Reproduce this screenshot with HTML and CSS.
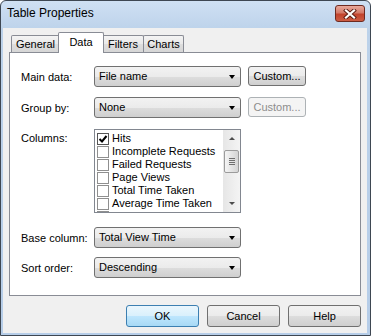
FILE: index.html
```html
<!DOCTYPE html>
<html lang="en">
<head>
    <meta charset="UTF-8">
    <title>Table Properties</title>
    <link rel="stylesheet" href="styles.css">
</head>
<body>
    <div class="window">
        <div class="titlebar">
            <span class="title">Table Properties</span>
            <button class="close">
                <svg width="14" height="10" viewBox="0 0 14 10">
                    <path d="M3 1.5 L11 8.5 M11 1.5 L3 8.5" stroke="#5a1a12" stroke-width="4" stroke-linecap="square"/>
                    <path d="M3 1.5 L11 8.5 M11 1.5 L3 8.5" stroke="#fff" stroke-width="2.2" stroke-linecap="square"/>
                </svg>
            </button>
        </div>
        <div class="client">
            <div class="tabs">
                <div class="tab tab-general">General</div>
                <div class="tab tab-data active">Data</div>
                <div class="tab tab-filters">Filters</div>
                <div class="tab tab-charts">Charts</div>
            </div>
            <div class="panel">
                <div class="row row-main">
                    <label>Main data:</label>
                    <div class="combo">File name<span class="arrow"></span></div>
                    <button class="btn custom">Custom...</button>
                </div>
                <div class="row row-group">
                    <label>Group by:</label>
                    <div class="combo">None<span class="arrow"></span></div>
                    <button class="btn custom" disabled>Custom...</button>
                </div>
                <div class="row row-columns">
                    <label class="top">Columns:</label>
                    <div class="listbox">
                        <ul class="items">
                            <li><span class="check on"><svg width="10" height="10" viewBox="0 0 10 10"><path d="M1.5 5 L4 7.5 L8.5 2" fill="none" stroke="#000" stroke-width="2"/></svg></span>Hits</li>
                            <li><span class="check"></span>Incomplete Requests</li>
                            <li><span class="check"></span>Failed Requests</li>
                            <li><span class="check"></span>Page Views</li>
                            <li><span class="check"></span>Total Time Taken</li>
                            <li><span class="check"></span>Average Time Taken</li>
                            <li><span class="check"></span>Total View Time</li>
                        </ul>
                        <div class="scrollbar">
                            <div class="sb-btn"><span class="sb-up"></span></div>
                            <div class="sb-track">
                                <div class="thumb"><span class="grip"></span></div>
                            </div>
                            <div class="sb-btn"><span class="sb-down"></span></div>
                        </div>
                    </div>
                </div>
                <div class="row row-base">
                    <label>Base column:</label>
                    <div class="combo">Total View Time<span class="arrow"></span></div>
                </div>
                <div class="row row-sort">
                    <label>Sort order:</label>
                    <div class="combo">Descending<span class="arrow"></span></div>
                </div>
            </div>
            <div class="actions">
                <button class="btn action default">OK</button>
                <button class="btn action">Cancel</button>
                <button class="btn action">Help</button>
            </div>
        </div>
    </div>
</body>
</html>
```

FILE: styles.css
```css
body {
    margin: 0;
    font-family: 'Liberation Sans', Arial, sans-serif;
    font-size: 11px;
    color: #000;
    background: #fff;
}
.window {
    box-sizing: border-box;
    width: 371px;
    height: 336px;
    border: 1px solid #3e4752;
    border-radius: 6px 6px 0 0;
    background: linear-gradient(#cfe0f3, #bcd2ea 30px, #b6cde8);
    display: flex;
    flex-direction: column;
}
.titlebar {
    height: 27px;
    display: flex;
    align-items: flex-start;
    padding: 0 5px 0 6px;
}
.title {
    font-size: 12px;
    line-height: 14px;
    padding-top: 5px;
}
.close {
    margin-left: auto;
    margin-top: 4px;
    width: 30px;
    height: 17px;
    padding: 0;
    border: 1px solid #6e2a20;
    border-radius: 3px;
    background: linear-gradient(#e9a99b, #d47b6a 45%, #c2432d 55%, #cc5d44);
    display: flex;
    align-items: center;
    justify-content: center;
}
.client {
    flex: 1;
    margin: 0 3px 2px 2px;
    background: #f0f0f0;
    padding: 4px 6px 0 6px;
    display: flex;
    flex-direction: column;
}
.tabs {
    display: flex;
    align-items: flex-end;
    height: 21px;
    margin: 0 0 -1px 2px;
    position: relative;
    z-index: 1;
}
.tab {
    box-sizing: border-box;
    height: 17px;
    margin-bottom: 1px;
    border: 1px solid #898c95;
    border-bottom: none;
    border-radius: 2px 2px 0 0;
    background: linear-gradient(#f4f4f4, #e9e9e9 50%, #dedede 51%, #d6d6d6);
    text-align: center;
    line-height: 16px;
}
.tab-general { width: 49px; }
.tab-data { width: 46px; }
.tab-filters { width: 42px; }
.tab-charts { width: 41px; margin-left: -1px; }
.tab.active {
    height: 21px;
    margin: 0 -2px;
    background: #fff;
    position: relative;
    z-index: 2;
    line-height: 18px;
}
.panel {
    box-sizing: border-box;
    height: 244px;
    border: 1px solid #898c95;
    background: #fff;
    padding: 0 0 0 11px;
}
.row {
    display: flex;
    align-items: center;
}
.row-main { margin-top: 13px; }
.row-group { margin-top: 10px; }
.row-columns { margin-top: 11px; align-items: flex-start; }
.row-base { margin-top: 14px; }
.row-sort { margin-top: 9px; }
label {
    width: 73px;
}
label.top {
    padding-top: 3px;
}
.combo {
    box-sizing: border-box;
    width: 147px;
    height: 21px;
    border: 1px solid #707070;
    border-radius: 3px;
    background: linear-gradient(#f2f2f2, #ebebeb 50%, #dddddd 51%, #cfcfcf);
    padding-left: 4px;
    line-height: 19px;
    position: relative;
}
.arrow {
    position: absolute;
    right: 5px;
    top: 8px;
    border-left: 3.5px solid transparent;
    border-right: 3.5px solid transparent;
    border-top: 4px solid #000;
}
.btn {
    box-sizing: border-box;
    font-family: inherit;
    font-size: 11px;
    color: #000;
    border: 1px solid #707070;
    border-radius: 3px;
    background: linear-gradient(#f2f2f2, #ebebeb 50%, #dddddd 51%, #cfcfcf);
    padding: 0;
}
.btn:disabled {
    color: #8d8d8d;
    border-color: #adb2b5;
    background: #f4f4f4;
}
.custom {
    width: 58px;
    height: 20px;
    margin-left: 7px;
    align-self: flex-start;
}
.listbox {
    box-sizing: border-box;
    width: 147px;
    height: 84px;
    border: 1px solid #828790;
    display: flex;
    overflow: hidden;
}
.items {
    flex: 1;
    list-style: none;
    margin: 0;
    padding: 2px 0 0 2px;
    overflow: hidden;
}
.items li {
    height: 13px;
    line-height: 13px;
    display: flex;
    align-items: center;
    white-space: nowrap;
}
.check {
    box-sizing: border-box;
    width: 12px;
    height: 12px;
    border: 1px solid #8f8f8f;
    background: #fff;
    margin-right: 3px;
    display: flex;
    align-items: center;
    justify-content: center;
}
.check.on {
    border-color: #555;
}
.scrollbar {
    width: 17px;
    display: flex;
    flex-direction: column;
    background: linear-gradient(90deg, #e6e6e6, #f4f4f4);
}
.sb-btn {
    height: 17px;
    display: flex;
    align-items: center;
    justify-content: center;
}
.sb-up {
    border-left: 3px solid transparent;
    border-right: 3px solid transparent;
    border-bottom: 3px solid #4d4d4d;
}
.sb-down {
    border-left: 3px solid transparent;
    border-right: 3px solid transparent;
    border-top: 3px solid #4d4d4d;
}
.sb-track {
    flex: 1;
    padding-top: 3px;
}
.thumb {
    box-sizing: border-box;
    height: 23px;
    margin: 0 1px 0 1px;
    border: 1px solid #9b9b9b;
    border-radius: 2px;
    background: linear-gradient(90deg, #f4f4f4, #e4e4e4 50%, #d4d4d4);
    display: flex;
    align-items: center;
    justify-content: center;
}
.grip {
    width: 6px;
    height: 7px;
    background: repeating-linear-gradient(#6e6e6e 0 1px, transparent 1px 2px);
}
.actions {
    display: flex;
    justify-content: flex-end;
    gap: 8px;
    margin-top: 9px;
}
.action {
    width: 73px;
    height: 22px;
}
.action.default {
    border-color: #3c7fb1;
    background: linear-gradient(#eaf6fd, #d9f0fc 50%, #bee6fd 51%, #a7d9f5);
}
```
